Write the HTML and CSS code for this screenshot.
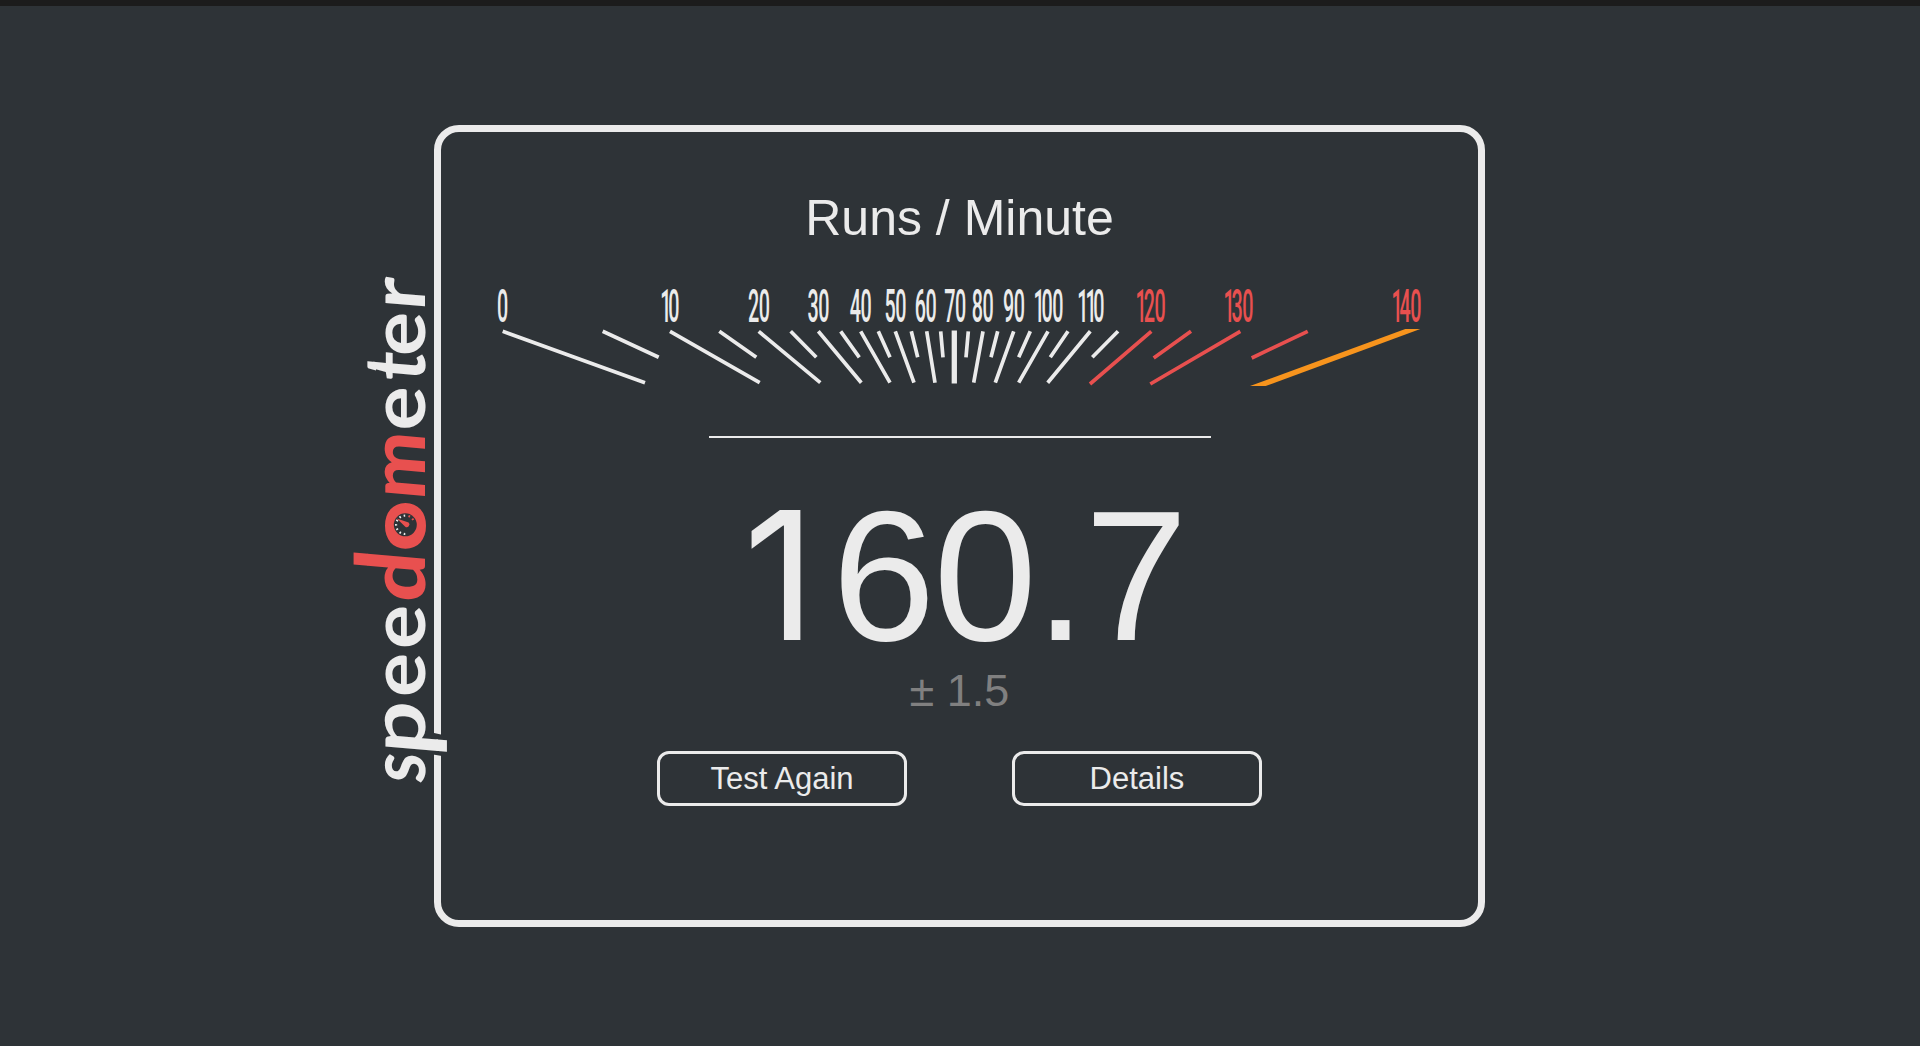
FILE: index.html
```html
<!DOCTYPE html>
<html lang="en">
<head>
<meta charset="utf-8">
<title>Speedometer</title>
<link rel="stylesheet" href="styles.css">
</head>
<body>
<div class="topbar"></div>
<main class="panel">
  <svg class="logo" viewBox="345 265 110 525" aria-label="speedometer">
    <defs>
      <clipPath id="above-d"><rect x="-20" y="-90" width="100" height="33"/></clipPath>
      <clipPath id="above-t"><rect x="-20" y="-90" width="100" height="41"/></clipPath>
      <clipPath id="below-p"><rect x="-20" y="11.5" width="100" height="30"/></clipPath>
    </defs>
    <path class="gap" d="M433 732.7L442 734.7V756L433 754.5Z"/>
    <g transform="translate(425 783) rotate(-90)">
      <g class="word">
        <text transform="translate(-1.5 0) skewX(-5) scale(.88 1)">s</text>
        <g transform="translate(27.5 0) skewX(-5) scale(1.2 1)">
          <text id="p">p</text>
          <g clip-path="url(#below-p)"><use href="#p" y="8.5"/></g>
        </g>
        <text transform="translate(86 0) scale(1.07 1)">e</text>
        <text transform="translate(134 0) scale(1.07 1)">e</text>
        <text transform="translate(352.5 0) scale(1.07 1)">e</text>
        <g transform="translate(400 0) skewX(-5)">
          <text id="t">t</text>
          <g clip-path="url(#above-t)"><use href="#t" y="-6.5"/></g>
        </g>
        <text transform="translate(427 0) scale(1.07 1)">e</text>
        <text transform="translate(471.5 0) skewX(-5) scale(1.1 1)">r</text>
      </g>
      <g class="word accent">
        <g transform="translate(179.5 0) skewX(-5) scale(1.13 1)">
          <text id="d">d</text>
          <g clip-path="url(#above-d)"><use href="#d" y="-14"/></g>
        </g>
        <text class="ring" transform="translate(233.6 -1) scale(1.12 1)">o</text>
        <text transform="translate(282.5 0) skewX(-5) scale(1.03 1)">m</text>
      </g>
    </g>
    <circle class="dial" cx="405.3" cy="524.8" r="11.5"/>
    <path class="dots" d="M405.3 534A9.2 9.2 0 0 1 405.3 515.6"/>
    <path class="dots dots-red" d="M408.5 516A9.2 9.2 0 0 1 413.5 520.5"/>
    <path class="hand" d="M396.8 518.6L408.6 522.6A2.6 2.6 0 0 1 405 526.4Z"/>
  </svg>
  <h1 class="title">Runs / Minute</h1>
  <svg class="gauge" viewBox="490 280 940 112">
    <g class="labels">
      <text transform="translate(497 321.7) scale(.42 1)">0</text>
      <text transform="translate(660.3 321.7) scale(.42 1)" dx="0 -7">10</text>
      <text transform="translate(748 321.7) scale(.42 1)">20</text>
      <text transform="translate(807.4 321.7) scale(.42 1)">30</text>
      <text transform="translate(849.7 321.7) scale(.42 1)">40</text>
      <text transform="translate(884.4 321.7) scale(.42 1)">50</text>
      <text transform="translate(914.8 321.7) scale(.42 1)">60</text>
      <text transform="translate(944.3 321.7) scale(.42 1)">70</text>
      <text transform="translate(971.7 321.7) scale(.42 1)">80</text>
      <text transform="translate(1003 321.7) scale(.42 1)">90</text>
      <text transform="translate(1033.6 321.7) scale(.42 1)" dx="0 -7">100</text>
      <text transform="translate(1077.2 321.7) scale(.42 1)" dx="0 -6 -7">110</text>
      <g class="hot">
        <text transform="translate(1135.6 321.7) scale(.42 1)" dx="0 -6.5">120</text>
        <text transform="translate(1223.5 321.7) scale(.42 1)" dx="0 -6.5">130</text>
        <text transform="translate(1391.4 321.7) scale(.42 1)" dx="0 -6.5">140</text>
      </g>
    </g>
    <path class="ticks" d="M502.7 331.3L645 382.7M602.7 331.3L658.7 357.3M670 331.3L759.7 382.7M719.3 331.3L756.3 357.3M758.7 331.3L820.3 382.7M790.7 331.3L816.3 357.3M818.3 331.3L861.3 382.7M840.7 331.3L859.3 357.3M860.7 331.3L890 382.7M878.3 331.3L890 357.3M895.3 331.3L914 382.7M911.3 331.3L917.7 357.3M926.7 331.3L935 382.7M940.7 331.3L943 357.3M968.3 331.3L966 357.3M983 331.3L973.7 382.7M997.7 331.3L991 357.3M1013.7 331.3L995.3 382.7M1030.3 331.3L1018.7 357.3M1048 331.3L1018.7 382.7M1068 331.3L1050.3 357.3M1090.3 331.3L1047.7 382.7M1118 331.3L1092.3 357.3"/>
    <path class="ticks center" d="M954.3 330.5V383.5"/>
    <path class="ticks red" d="M1151.3 331.3L1090 384M1191 331.3L1153.7 358M1240.3 331.3L1150.3 384M1307.7 331.3L1251.7 358"/>
    <path class="needle" d="M1405.3 329H1420.3L1265.7 386H1250Z"/>
  </svg>
  <hr class="rule">
  <div class="score"><span class="one">1</span>60.7</div>
  <div class="margin">± 1.5</div>
  <div class="buttons">
    <button class="btn">Test Again</button>
    <button class="btn">Details</button>
  </div>
</main>
</body>
</html>
```
FILE: styles.css
```css
* { box-sizing: border-box; }
body {
  margin: 0;
  height: 1046px;
  overflow: hidden;
  background: #2e3337;
  color: #ebebeb;
  font-family: "Liberation Sans", Arial, sans-serif;
}
.topbar { height: 6px; background: #1c1c1c; }
.panel {
  position: relative;
  display: flex;
  flex-direction: column;
  align-items: center;
  width: 1051px;
  height: 802px;
  margin: 119px auto 0 434px;
  padding-top: 57px;
  border: 7px solid #ebebeb;
  border-radius: 25px;
}
.logo { position: absolute; left: -96px; top: 133px; width: 110px; height: 525px; }
.gap, .dial { fill: #2e3337; }
.word { font: 700 77px Lato, sans-serif; fill: #ebebeb; }
.accent { font-weight: 900; fill: #e8504f; }
.ring { font-size: 73px; stroke: #e8504f; stroke-width: 3; }
.dots { fill: none; stroke: #ebebeb; stroke-width: 2.2; stroke-dasharray: 1.6 2.9; }
.dots-red { stroke: #e8504f; }
.hand { fill: #e8504f; }
.title { margin: 0; font-size: 50px; font-weight: 400; line-height: 58px; }
.gauge { width: 940px; height: 112px; margin-top: 33px; }
.labels { font: 500 47px Roboto, sans-serif; fill: #ebebeb; letter-spacing: -1px; }
.hot { fill: #e8504f; }
.ticks { stroke: #ebebeb; stroke-width: 3.7; fill: none; }
.center { stroke-width: 5.3; }
.red { stroke: #e8504f; }
.needle { fill: #f7941d; }
.rule { width: 502px; height: 2px; margin: 44px 0 0; border: 0; background: #ebebeb; }
.score {
  height: 179px;
  margin-top: 48px;
  padding-right: 2px;
  font-size: 186px;
  line-height: 176px;
  letter-spacing: -2px;
}
.one {
  display: inline-block;
  width: 101px;
  padding-right: 18px;
  font-family: Inter, sans-serif;
  font-size: 179px;
  line-height: 1;
  text-align: right;
}
.margin { font-size: 45px; line-height: 52px; color: #808080; }
.buttons { display: flex; gap: 105px; margin-top: 34px; }
.btn {
  width: 250px;
  height: 55px;
  padding: 0;
  border: 3px solid #ebebeb;
  border-radius: 12px;
  background: transparent;
  color: #ebebeb;
  font: 31px "Liberation Sans", Arial, sans-serif;
}
```
